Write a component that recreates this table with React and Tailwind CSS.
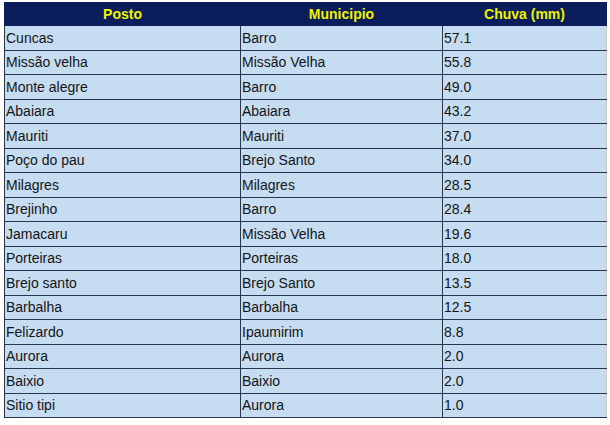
import React from 'react';

const rows = [
  ['Cuncas', 'Barro', '57.1'],
  ['Missão velha', 'Missão Velha', '55.8'],
  ['Monte alegre', 'Barro', '49.0'],
  ['Abaiara', 'Abaiara', '43.2'],
  ['Mauriti', 'Mauriti', '37.0'],
  ['Poço do pau', 'Brejo Santo', '34.0'],
  ['Milagres', 'Milagres', '28.5'],
  ['Brejinho', 'Barro', '28.4'],
  ['Jamacaru', 'Missão Velha', '19.6'],
  ['Porteiras', 'Porteiras', '18.0'],
  ['Brejo santo', 'Brejo Santo', '13.5'],
  ['Barbalha', 'Barbalha', '12.5'],
  ['Felizardo', 'Ipaumirim', '8.8'],
  ['Aurora', 'Aurora', '2.0'],
  ['Baixio', 'Baixio', '2.0'],
  ['Sitio tipi', 'Aurora', '1.0'],
];

export default function App() {
  return (
    <div className="w-[610px] h-[425px] bg-white pt-[2px] pl-[4px]" style={{ fontFamily: '"Liberation Sans", Arial, sans-serif' }}>
      <table className="w-[602px] border-collapse text-[14px] text-[#151515] table-fixed">
        <colgroup>
          <col className="w-[236px]" />
          <col className="w-[202px]" />
          <col className="w-[164px]" />
        </colgroup>
        <thead>
          <tr className="h-[23px] bg-[#0b1d5a] text-[#eef300] font-bold">
            <th className="border border-[#0b1d5a] font-bold text-center">Posto</th>
            <th className="border border-[#0b1d5a] font-bold text-center">Municipio</th>
            <th className="border border-[#0b1d5a] font-bold text-center">Chuva (mm)</th>
          </tr>
        </thead>
        <tbody>
          {rows.map(r => (
            <tr key={r[0]} className="h-[24.5px] bg-[#c5dcf1]">
              <td className="border border-[#2a3550] pl-[1px] leading-none">{r[0]}</td>
              <td className="border border-[#2a3550] pl-[1px] leading-none">{r[1]}</td>
              <td className="border border-[#2a3550] border-r-[#c8c8c8] pl-[1px] leading-none">{r[2]}</td>
            </tr>
          ))}
        </tbody>
      </table>
    </div>
  );
}
